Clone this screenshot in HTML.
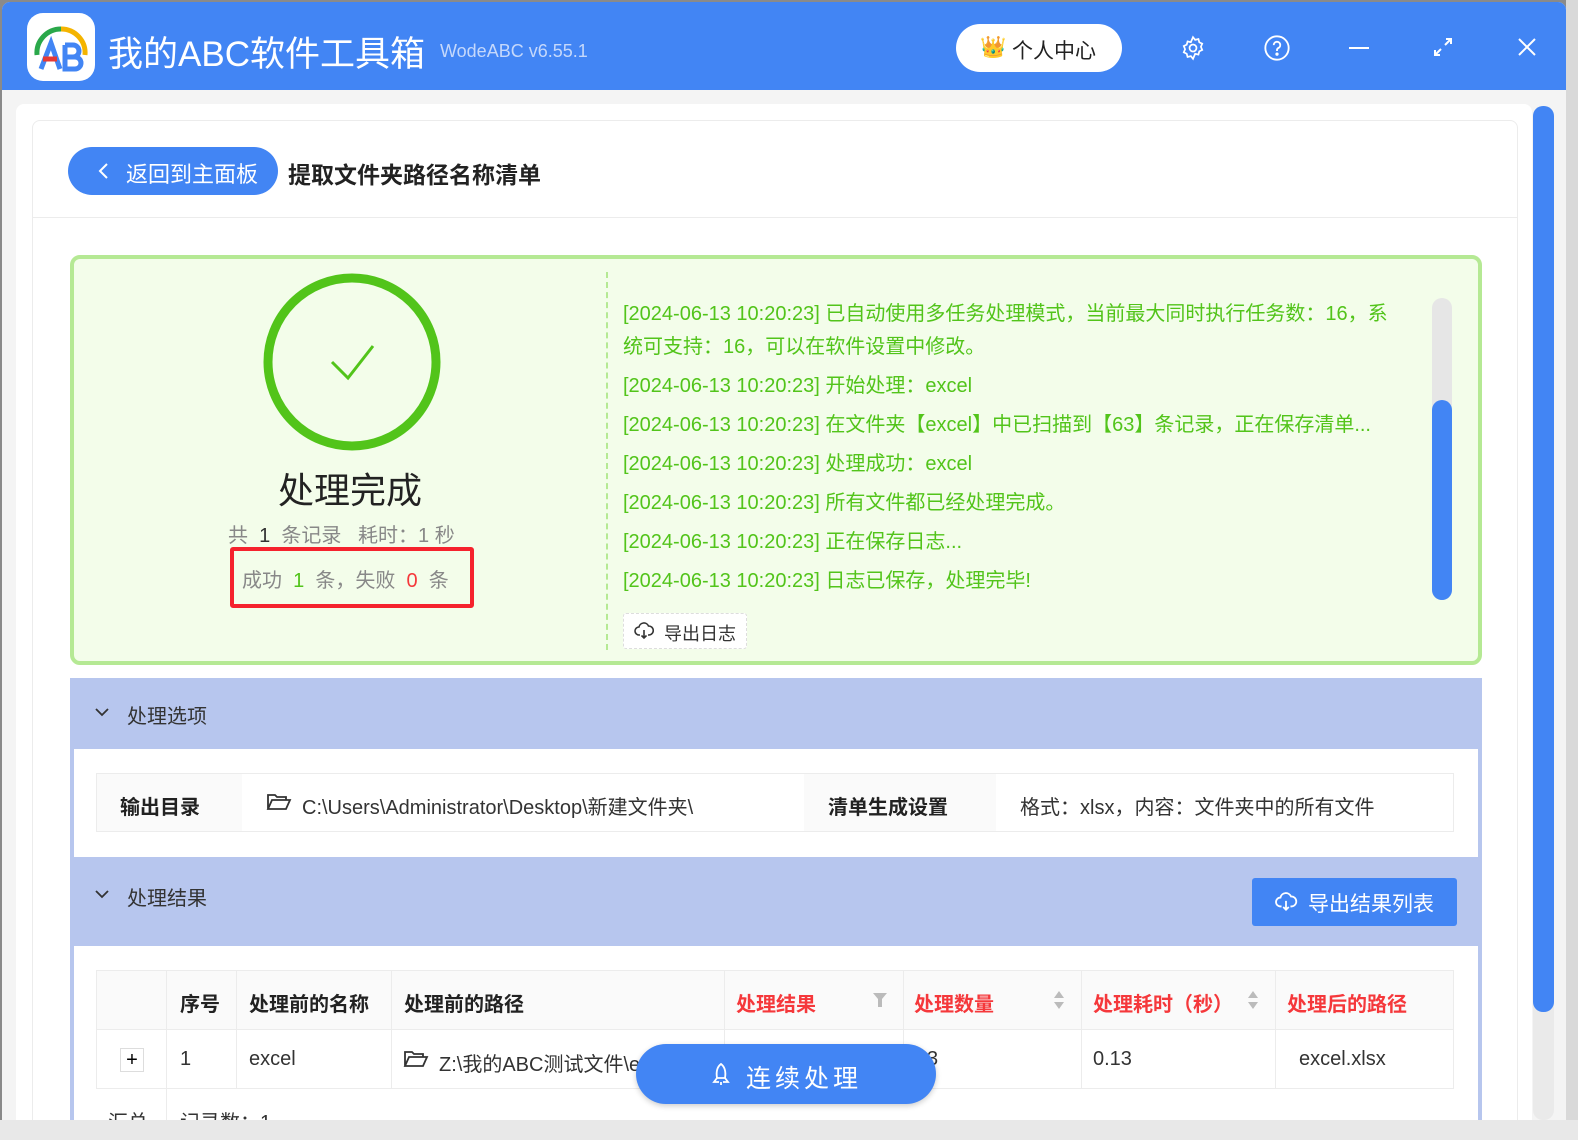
<!DOCTYPE html>
<html><head><meta charset="utf-8"><style>
*{box-sizing:border-box;margin:0;padding:0}
html,body{width:1578px;height:1140px;overflow:hidden}
body{background:#8a8a8a;font-family:"Liberation Sans","Noto Sans CJK SC",sans-serif;position:relative}
.a{position:absolute}
.win{left:2px;top:2px;width:1564px;height:1118px;background:#f4f4f4;border-radius:8px 8px 0 0;overflow:hidden}
.tb{left:0;top:0;width:1564px;height:88px;background:#4285f4}
.t{white-space:nowrap}
.log{color:#52c41a;font-size:20px;left:621px;width:780px;line-height:33px}
.th{font-weight:bold;font-size:20px;color:#222}
.red{color:#f5383b}
</style></head><body>
<div class="a" style="left:0;top:1120px;width:1578px;height:20px;background:#e8e8e8"></div>
<div class="a" style="left:1566px;top:0;width:12px;height:1120px;background:#d9d9d9"></div>
<div class="a win">
 <div class="a tb"></div>
 <div class="a" style="left:25px;top:11px;width:68px;height:68px;background:#fff;border-radius:16px"></div>
 <svg class="a" style="left:25px;top:11px" width="68" height="68" viewBox="0 0 68 68">
  <path d="M10 42 A24 24 0 0 1 34 16" stroke="#2aa84a" stroke-width="5" fill="none"/>
  <path d="M34 16 A24 24 0 0 1 58 42" stroke="#f4b400" stroke-width="5" fill="none"/>
  <path d="M14 56 L24 30 L33 56" stroke="#4285f4" stroke-width="5" fill="none"/>
  <path d="M16 46 H30" stroke="#e53935" stroke-width="5"/>
  <path d="M38 32 V56 H48 A6 6 0 0 0 48 44 H38 M38 32 H46 A6 6 0 0 1 46 44" stroke="#4285f4" stroke-width="5" fill="none"/>
 </svg>
 <div class="a t" style="left:106px;top:24px;font-size:35px;color:#fff">我的ABC软件工具箱</div>
 <div class="a t" style="left:438px;top:39px;font-size:18px;color:#c5d8fb">WodeABC v6.55.1</div>
 <div class="a" style="left:954px;top:22px;width:166px;height:48px;background:#fff;border-radius:24px"></div>
 <div class="a t" style="left:978px;top:34px;font-size:21px">👑</div>
 <div class="a t" style="left:1010px;top:33px;font-size:21px;color:#222">个人中心</div>
 <svg class="a" style="left:1178px;top:33px" width="26" height="26" viewBox="0 0 24 24" fill="none" stroke="#fff" stroke-width="1.6"><circle cx="12" cy="12" r="3.2"/><path d="M12 2l2 2.5 3-.8.8 3 2.7 1.3-1.2 2.9 1.2 2.9-2.7 1.3-.8 3-3-.8L12 22l-2-2.5-3 .8-.8-3-2.7-1.3 1.2-2.9-1.2-2.9 2.7-1.3.8-3 3 .8z"/></svg>
 <svg class="a" style="left:1261px;top:32px" width="28" height="28" viewBox="0 0 24 24" fill="none" stroke="#fff" stroke-width="1.6"><circle cx="12" cy="12" r="10"/><path d="M9.2 9.5a2.8 2.8 0 1 1 4 2.5c-.8.4-1.2 1-1.2 1.8v.8"/><circle cx="12" cy="17.3" r=".6" fill="#fff"/></svg>
 <div class="a" style="left:1347px;top:45px;width:20px;height:2px;background:#fff"></div>
 <svg class="a" style="left:1430px;top:34px" width="22" height="22" viewBox="0 0 22 22" stroke="#fff" stroke-width="2" fill="none"><path d="M13 9L19 3M14 3h5v5M9 13L3 19M3 14v5h5"/></svg>
 <svg class="a" style="left:1514px;top:34px" width="22" height="22" viewBox="0 0 22 22" stroke="#fff" stroke-width="2"><path d="M3 3L19 19M19 3L3 19"/></svg>

 <div class="a" style="left:14px;top:102px;width:1516px;height:1030px;background:#fff;border-radius:8px"></div>
 <div class="a" style="left:30px;top:118px;width:1486px;height:1020px;border:1px solid #ececec;border-radius:8px"></div>
 <div class="a" style="left:31px;top:215px;width:1484px;height:1px;background:#ececec"></div>
 <div class="a" style="left:1531px;top:104px;width:21px;height:1014px;background:#eaeaea;border-radius:10px"></div>
 <div class="a" style="left:1531px;top:104px;width:21px;height:906px;background:#4285f4;border-radius:10px"></div>

 <div class="a" style="left:66px;top:145px;width:210px;height:48px;background:#4285f4;border-radius:24px"></div>
 <svg class="a" style="left:94px;top:160px" width="14" height="18" viewBox="0 0 14 18"><path d="M11 2L4 9l7 7" stroke="#fff" stroke-width="2" fill="none"/></svg>
 <div class="a t" style="left:124px;top:155px;font-size:22px;color:#fff">返回到主面板</div>
 <div class="a t" style="left:286px;top:154px;font-size:23px;font-weight:bold;color:#222">提取文件夹路径名称清单</div>

 <div class="a" style="left:68px;top:253px;width:1412px;height:410px;background:#f3fdea;border:4px solid #b5e994;border-radius:10px"></div>
 <svg class="a" style="left:258px;top:268px" width="184" height="184"><circle cx="92" cy="92" r="84" fill="none" stroke="#52c41a" stroke-width="9"/><path d="M72 92L88 108 113 76" fill="none" stroke="#52c41a" stroke-width="3"/></svg>
 <div class="a t" style="left:276px;top:460px;font-size:36px;color:#222">处理完成</div>
 <div class="a t" style="left:226px;top:517px;font-size:20px;color:#888">共 <b style="color:#333;font-weight:normal">&nbsp;1&nbsp;</b> 条记录 &nbsp; 耗时：1 秒</div>
 <div class="a" style="left:228px;top:545px;width:244px;height:61px;border:4px solid #f5222d;border-radius:3px"></div>
 <div class="a t" style="left:240px;top:562px;font-size:20px;color:#888">成功 <span style="color:#52c41a">&nbsp;1&nbsp;</span> 条，失败 <span style="color:#f5383b">&nbsp;0&nbsp;</span> 条</div>
 <div class="a" style="left:604px;top:270px;height:378px;border-left:2px dashed #b5e994"></div>
 <div class="a log" style="top:296px">[2024-06-13 10:20:23] 已自动使用多任务处理模式，当前最大同时执行任务数：16，系统可支持：16，可以在软件设置中修改。</div>
 <div class="a log t" style="top:368px">[2024-06-13 10:20:23] 开始处理：excel</div>
 <div class="a log t" style="top:407px">[2024-06-13 10:20:23] 在文件夹【excel】中已扫描到【63】条记录，正在保存清单...</div>
 <div class="a log t" style="top:446px">[2024-06-13 10:20:23] 处理成功：excel</div>
 <div class="a log t" style="top:485px">[2024-06-13 10:20:23] 所有文件都已经处理完成。</div>
 <div class="a log t" style="top:524px">[2024-06-13 10:20:23] 正在保存日志...</div>
 <div class="a log t" style="top:563px">[2024-06-13 10:20:23] 日志已保存，处理完毕!</div>
 <div class="a" style="left:1430px;top:296px;width:20px;height:302px;background:#e6e6e6;border-radius:10px"></div>
 <div class="a" style="left:1430px;top:398px;width:20px;height:200px;background:#4285f4;border-radius:10px"></div>
 <div class="a" style="left:621px;top:611px;width:124px;height:36px;background:#fff;border:1px dashed #ddd;border-radius:3px"></div>
 <svg class="a" style="left:632px;top:620px" width="20" height="18" viewBox="0 0 20 18" fill="none" stroke="#333" stroke-width="1.6"><path d="M6 13H5a4 4 0 0 1 0-8 5 5 0 0 1 9.5-1A4 4 0 0 1 15 13h-1M10 8v8M7.5 13.5 10 16l2.5-2.5"/></svg>
 <div class="a t" style="left:662px;top:618px;font-size:18px;color:#333">导出日志</div>

 <div class="a" style="left:68px;top:676px;width:1412px;height:454px;background:#b7c6ee"></div>
 <svg class="a" style="left:92px;top:704px" width="16" height="12" viewBox="0 0 16 12"><path d="M2 3l6 6 6-6" stroke="#333" stroke-width="1.8" fill="none"/></svg>
 <div class="a t" style="left:125px;top:698px;font-size:20px;color:#333">处理选项</div>
 <div class="a" style="left:72px;top:747px;width:1404px;height:108px;background:#fff"></div>
 <div class="a" style="left:94px;top:771px;width:1358px;height:59px;border:1px solid #ececec"></div>
 <div class="a" style="left:95px;top:772px;width:145px;height:57px;background:#fafafa"></div>
 <div class="a" style="left:802px;top:772px;width:192px;height:57px;background:#fafafa"></div>
 <div class="a t th" style="left:118px;top:789px">输出目录</div>
 <svg class="a" style="left:264px;top:790px" width="26" height="20" viewBox="0 0 26 20" fill="none" stroke="#333" stroke-width="1.8"><path d="M2 17V3h7l2 2h9v3M2 17l4-9h18l-4 9z"/></svg>
 <div class="a t" style="left:300px;top:789px;font-size:20px;color:#333">C:\Users\Administrator\Desktop\新建文件夹\</div>
 <div class="a t th" style="left:826px;top:789px">清单生成设置</div>
 <div class="a t" style="left:1018px;top:789px;font-size:20px;color:#333">格式：xlsx，内容：文件夹中的所有文件</div>

 <svg class="a" style="left:92px;top:886px" width="16" height="12" viewBox="0 0 16 12"><path d="M2 3l6 6 6-6" stroke="#333" stroke-width="1.8" fill="none"/></svg>
 <div class="a t" style="left:125px;top:880px;font-size:20px;color:#333">处理结果</div>
 <div class="a" style="left:1250px;top:876px;width:205px;height:48px;background:#4285f4;border-radius:3px"></div>
 <svg class="a" style="left:1272px;top:890px" width="24" height="20" viewBox="0 0 20 18" fill="none" stroke="#fff" stroke-width="1.6"><path d="M6 13H5a4 4 0 0 1 0-8 5 5 0 0 1 9.5-1A4 4 0 0 1 15 13h-1M10 8v8M7.5 13.5 10 16l2.5-2.5"/></svg>
 <div class="a t" style="left:1306px;top:886px;font-size:21px;color:#fff">导出结果列表</div>
 <div class="a" style="left:72px;top:944px;width:1404px;height:190px;background:#fff"></div>
 <div class="a" style="left:94px;top:968px;width:1358px;height:60px;background:#fafafa;border:1px solid #ececec"></div>
 <div class="a" style="left:94px;top:1028px;width:1358px;height:59px;border:1px solid #ececec;border-top:none"></div>
 <div class="a" style="left:164px;top:968px;width:1px;height:150px;background:#ececec"></div>
 <div class="a" style="left:234px;top:968px;width:1px;height:119px;background:#ececec"></div>
 <div class="a" style="left:389px;top:968px;width:1px;height:119px;background:#ececec"></div>
 <div class="a" style="left:722px;top:968px;width:1px;height:119px;background:#ececec"></div>
 <div class="a" style="left:901px;top:968px;width:1px;height:119px;background:#ececec"></div>
 <div class="a" style="left:1079px;top:968px;width:1px;height:119px;background:#ececec"></div>
 <div class="a" style="left:1273px;top:968px;width:1px;height:119px;background:#ececec"></div>
 <div class="a t th" style="left:178px;top:986px">序号</div>
 <div class="a t th" style="left:247px;top:986px">处理前的名称</div>
 <div class="a t th" style="left:402px;top:986px">处理前的路径</div>
 <div class="a t th red" style="left:734px;top:986px">处理结果</div>
 <svg class="a" style="left:870px;top:990px" width="16" height="16" viewBox="0 0 16 16"><path d="M1 1h14l-5 6v8H6V7z" fill="#bbb"/></svg>
 <div class="a t th red" style="left:912px;top:986px">处理数量</div>
 <svg class="a" style="left:1051px;top:988px" width="12" height="20" viewBox="0 0 12 20"><path d="M6 1l5 7H1zM6 19l5-7H1z" fill="#bbb"/></svg>
 <div class="a t th red" style="left:1091px;top:986px">处理耗时（秒）</div>
 <svg class="a" style="left:1245px;top:988px" width="12" height="20" viewBox="0 0 12 20"><path d="M6 1l5 7H1zM6 19l5-7H1z" fill="#bbb"/></svg>
 <div class="a t th red" style="left:1285px;top:986px">处理后的路径</div>
 <div class="a" style="left:118px;top:1046px;width:24px;height:24px;border:1px solid #ddd;background:#fff;text-align:center;font-size:20px;line-height:22px">+</div>
 <div class="a t" style="left:178px;top:1046px;font-size:20px;color:#333">1</div>
 <div class="a t" style="left:247px;top:1046px;font-size:20px;color:#333">excel</div>
 <svg class="a" style="left:401px;top:1047px" width="26" height="20" viewBox="0 0 26 20" fill="none" stroke="#333" stroke-width="1.8"><path d="M2 17V3h7l2 2h9v3M2 17l4-9h18l-4 9z"/></svg>
 <div class="a t" style="left:437px;top:1046px;font-size:20px;color:#333">Z:\我的ABC测试文件\e</div>
 <div class="a t" style="left:925px;top:1046px;font-size:20px;color:#333">3</div>
 <div class="a t" style="left:1091px;top:1046px;font-size:20px;color:#333">0.13</div>
 <div class="a t" style="left:1297px;top:1046px;font-size:20px;color:#333">excel.xlsx</div>
 <div class="a t" style="left:106px;top:1104px;font-size:20px;color:#333">汇总</div>
 <div class="a t" style="left:178px;top:1104px;font-size:20px;color:#333">记录数：1</div>
 <div class="a" style="left:634px;top:1042px;width:300px;height:60px;background:#4285f4;border-radius:30px;box-shadow:0 2px 6px rgba(0,0,0,.2)"></div>
 <svg class="a" style="left:708px;top:1060px" width="22" height="26" viewBox="0 0 22 26" fill="none" stroke="#fff" stroke-width="1.8"><path d="M11 2c4 3 5 8 4 14H7C6 10 7 5 11 2zM7 16l-3 4h5M15 16l3 4h-5M11 20v3"/></svg>
 <div class="a t" style="left:744px;top:1057px;font-size:25px;color:#fff;letter-spacing:4px">连续处理</div>
</div>
</body></html>
